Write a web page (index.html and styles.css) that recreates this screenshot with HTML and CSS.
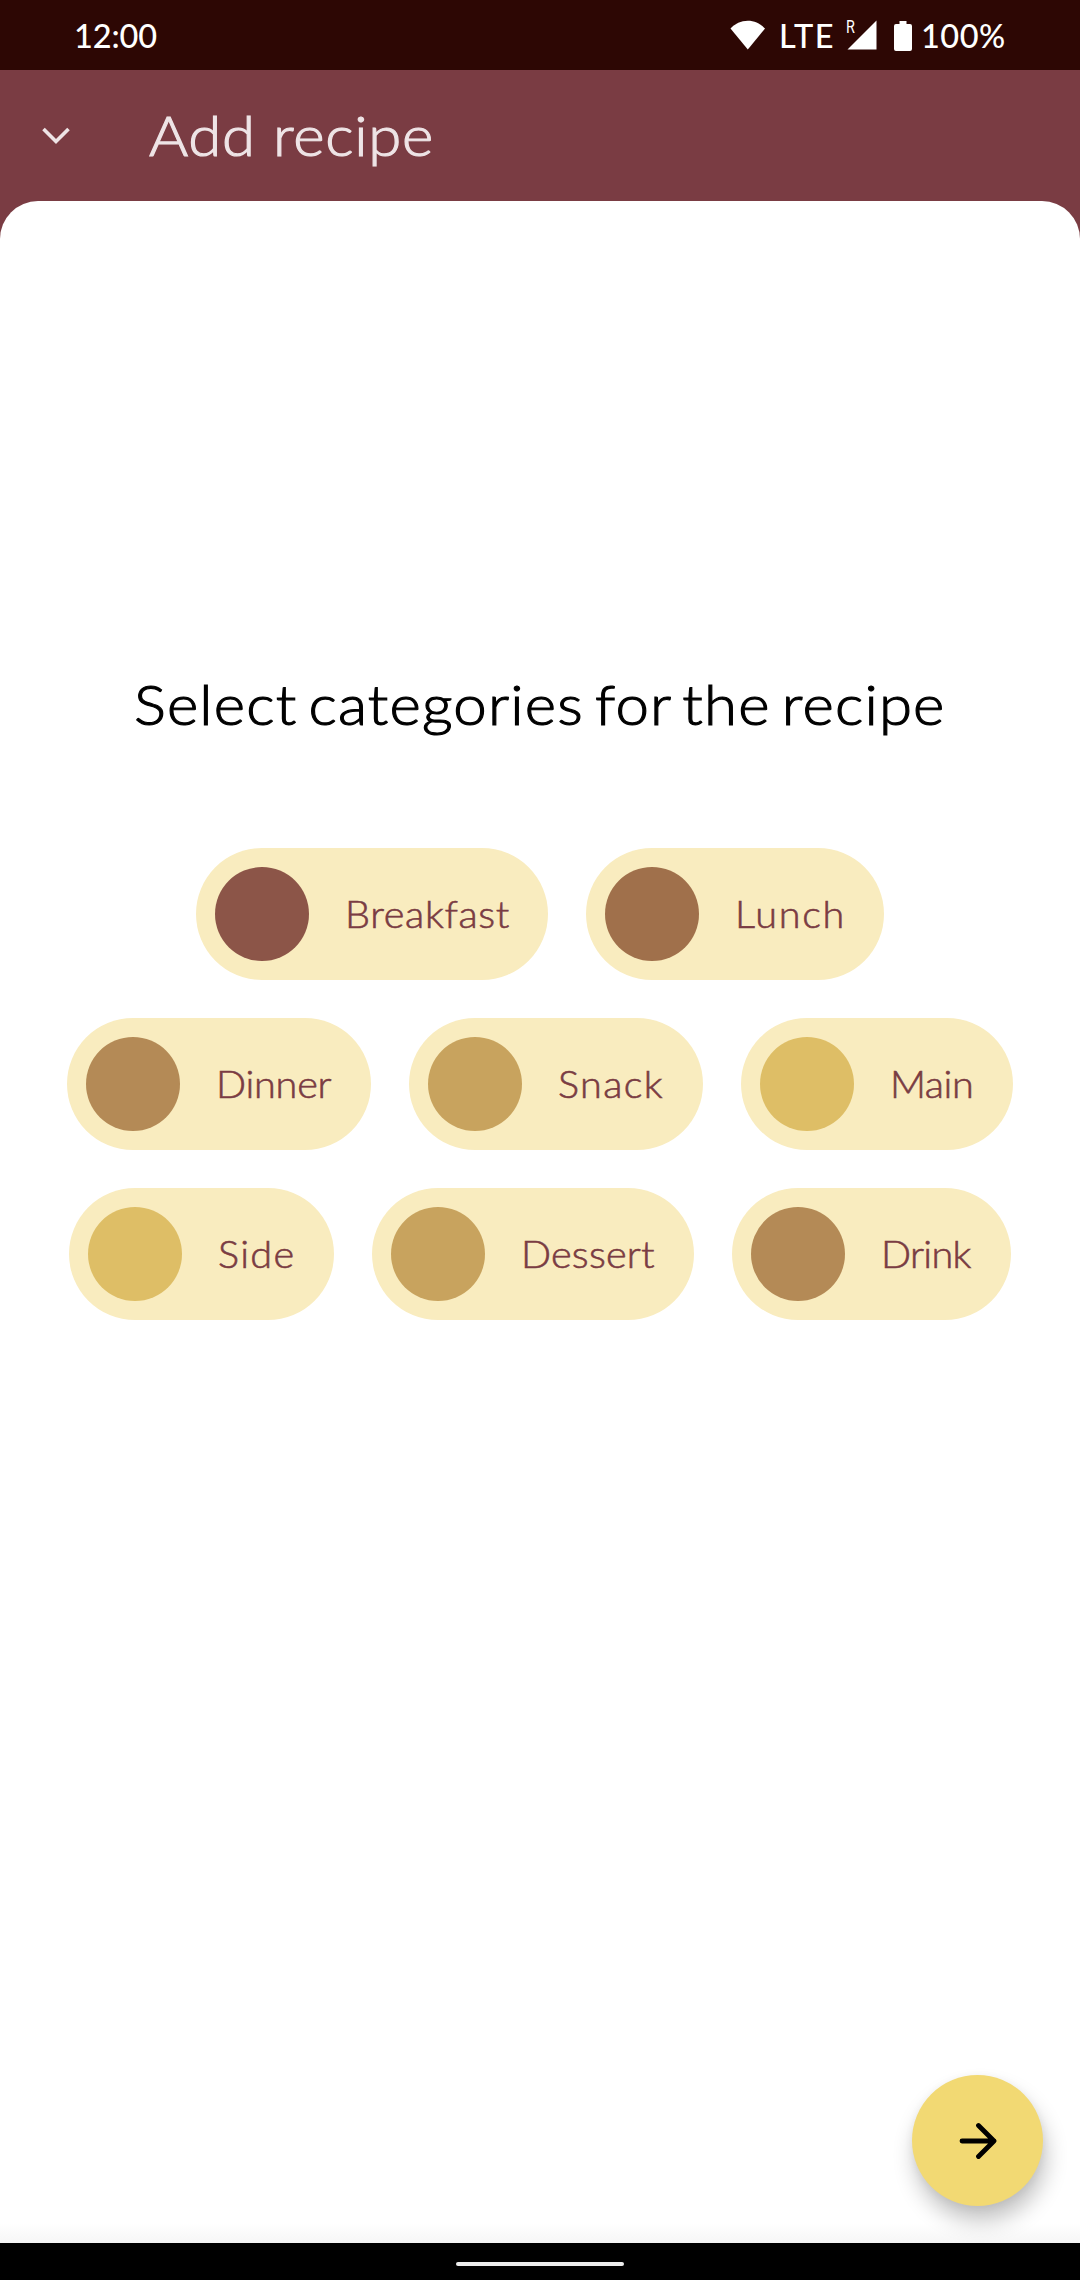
FILE: index.html
```
<!DOCTYPE html>
<html lang="en">
<head>
<meta charset="utf-8">
<title>Add recipe</title>
<link rel="stylesheet" href="styles.css">
</head>
<body>
<div class="screen">
  <div class="status-bar">
    <span class="clock">12:00</span>
    <div class="indicators">
      <svg class="wifi" viewBox="0 0 36 30"><path d="M0.5 8.6C5 3.500 11 0.700 17.800 0.700S30.600 3.500 35 8.600L17.800 29.500Z"/></svg>
      <span class="network">LTE</span>
      <span class="signal">
        <svg viewBox="0 0 30 30"><path d="M0.500 29.500H29.500V0.500Z"/></svg>
        <span class="roaming">R</span>
      </span>
      <svg class="battery" viewBox="0 0 18 30"><path d="M5.500 0H12.500V3H16Q18 3 18 5V28Q18 30 16 30H2Q0 30 0 28V5Q0 3 2 3H5.500Z"/></svg>
      <span class="charge">100%</span>
    </div>
  </div>
  <header class="app-bar">
    <svg class="collapse" viewBox="0 0 28 18"><path d="M1.500 2L14 14.500L26.500 2"/></svg>
    <h1 class="title">Add recipe</h1>
  </header>
  <main class="sheet">
    <h2 class="prompt">Select categories for the recipe</h2>
    <div class="categories">
      <div class="row">
        <div class="chip breakfast"><span class="swatch"></span><span class="label">Breakfast</span></div>
        <div class="chip lunch"><span class="swatch"></span><span class="label">Lunch</span></div>
      </div>
      <div class="row">
        <div class="chip dinner"><span class="swatch"></span><span class="label">Dinner</span></div>
        <div class="chip snack"><span class="swatch"></span><span class="label">Snack</span></div>
        <div class="chip main"><span class="swatch"></span><span class="label">Main</span></div>
      </div>
      <div class="row">
        <div class="chip side"><span class="swatch"></span><span class="label">Side</span></div>
        <div class="chip dessert"><span class="swatch"></span><span class="label">Dessert</span></div>
        <div class="chip drink"><span class="swatch"></span><span class="label">Drink</span></div>
      </div>
    </div>
    <div class="next"><svg viewBox="0 0 38 38"><path d="M3 19H35M19.500 3.500L35 19L19.500 34.500"/></svg></div>
  </main>
  <div class="nav-bar"><span class="handle"></span></div>
</div>
</body>
</html>
```
FILE: styles.css
```
* { box-sizing: border-box; }

body {
  margin: 0;
  font-family: Lato, "Open Sans", sans-serif;
  font-weight: 300;
}

svg { display: block; flex: none; }

.screen {
  display: flex;
  flex-direction: column;
  width: 1080px;
  height: 2280px;
  overflow: hidden;
  background: #7a3c43;
}

.status-bar {
  display: flex;
  justify-content: space-between;
  height: 70px;
  padding: 0 70px 0 74px;
  background: #2d0704;
  color: #fff;
  fill: #fff;
  font-size: 32.5px;
  font-weight: 500;
  line-height: 71px;
}

.clock { letter-spacing: -0.1px; }

.indicators {
  display: flex;
  align-items: flex-start;
  width: 280px;
}

.indicators > * { flex: none; }

.wifi { width: 36px; height: 30px; margin-top: 20px; }
.network { width: 68px; padding-left: 13px; letter-spacing: 1.4px; }

.signal {
  position: relative;
  width: 30px;
  height: 30px;
  margin: 20px 17px 0 13px;
}

.roaming {
  position: absolute;
  left: -1px;
  top: 0;
  font: 400 18px/14px Roboto, sans-serif;
  transform: scaleX(0.8);
  transform-origin: left;
}

.battery { width: 18px; height: 30px; margin-top: 21px; }
.charge { padding-left: 9px; letter-spacing: 0.5px; }

.app-bar {
  display: flex;
  align-items: center;
  height: 131px;
  padding-left: 42px;
}

.collapse {
  width: 28px;
  height: 18px;
  fill: none;
  stroke: #eee4e6;
  stroke-width: 3.6;
}

/* Headings and labels are set slightly wide */
.title,
.prompt,
.label {
  transform: scaleX(1.07);
  transform-origin: left;
  white-space: nowrap;
}

.title {
  margin: -1px 0 0 79px;
  font-size: 56px;
  font-weight: 300;
  line-height: 68px;
  letter-spacing: 0.7px;
  color: #eee4e6;
  -webkit-text-stroke: 1.1px #eee4e6;
}

.sheet {
  position: relative;
  flex: 1;
  padding-top: 468px;
  border-radius: 38px 38px 0 0;
  background: linear-gradient(to top, #f6f6f6, #fff 20px);
}

.prompt {
  margin: 0 0 0 134px;
  font-size: 56px;
  font-weight: 300;
  line-height: 70px;
  letter-spacing: 1.1px;
  word-spacing: -5.8px;
  color: #000;
  -webkit-text-stroke: 1.1px #000;
}

.categories {
  display: flex;
  flex-direction: column;
  gap: 38px;
  margin-top: 109px;
}

.row {
  display: flex;
  justify-content: center;
  gap: 38px;
}

.chip {
  display: flex;
  align-items: center;
  height: 132px;
  padding-left: 19px;
  border-radius: 66px;
  background: #f9ecbf;
  color: #7a3c43;
  font-size: 37px;
  line-height: 46px;
  -webkit-text-stroke: 0.6px #7a3c43;
}

.swatch {
  flex: none;
  width: 94px;
  height: 94px;
  margin-right: 36px;
  border-radius: 50%;
}

.breakfast { width: 352px; letter-spacing: 0.64px; }
.lunch { width: 298px; letter-spacing: 1.6px; }
.dinner { width: 304px; letter-spacing: -0.2px; }
.snack { width: 294px; letter-spacing: 1.3px; }
.main { width: 272px; letter-spacing: -0.4px; }
.side { width: 265px; letter-spacing: 1.25px; }
.dessert { width: 322px; letter-spacing: 0.2px; }
.drink { width: 279px; letter-spacing: -0.6px; }

.breakfast .swatch { background: #8c5548; }
.lunch .swatch { background: #a0704b; }
.dinner .swatch, .drink .swatch { background: #b48a56; }
.snack .swatch, .dessert .swatch { background: #c8a35e; }
.main .swatch, .side .swatch { background: #debe66; }

/* Floating action button */
.next {
  position: absolute;
  right: 37px;
  bottom: 37px;
  display: grid;
  place-items: center;
  width: 131px;
  height: 131px;
  border-radius: 50%;
  background: #f2d973;
  box-shadow: 3px 15px 22px rgba(0, 0, 0, 0.24), 0 2px 8px rgba(0, 0, 0, 0.06);
}

.next svg {
  width: 38px;
  height: 38px;
  fill: none;
  stroke: #000;
  stroke-width: 4.8;
  stroke-linecap: round;
  stroke-linejoin: round;
}

.nav-bar {
  display: flex;
  justify-content: center;
  height: 37px;
  padding-top: 19px;
  background: #000;
}

.handle {
  width: 168px;
  height: 4px;
  border-radius: 2px;
  background: #ececec;
}
```
